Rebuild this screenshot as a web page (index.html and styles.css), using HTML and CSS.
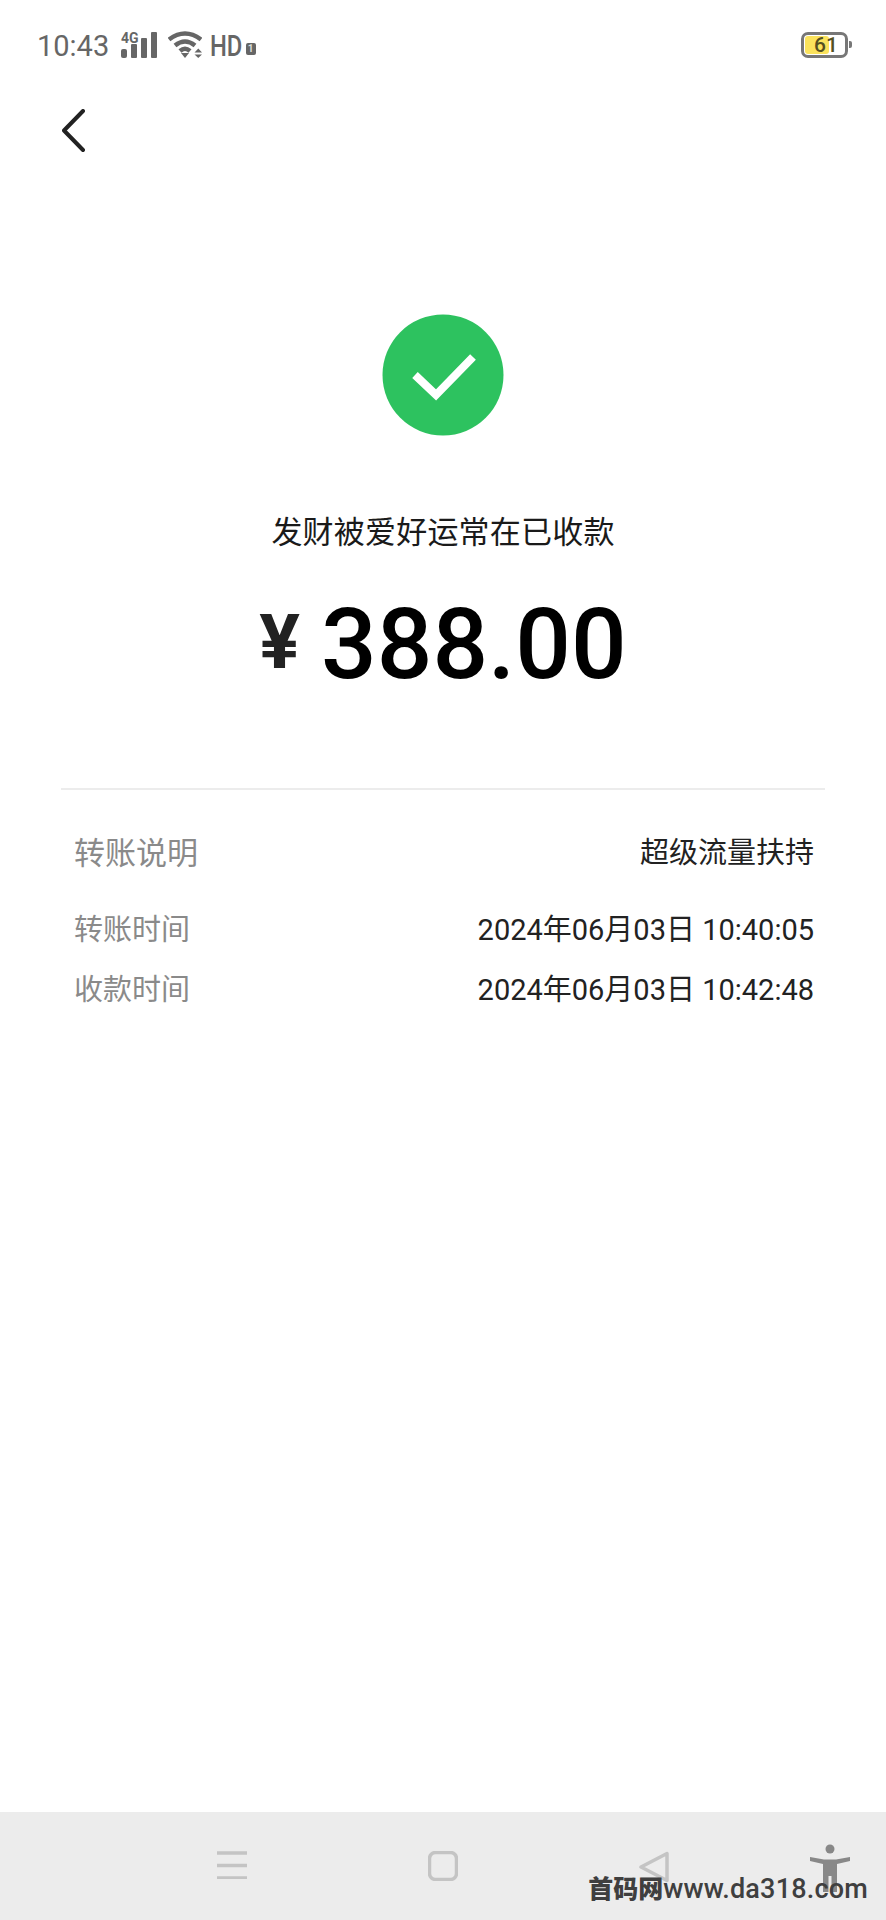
FILE: index.html
```html
<!DOCTYPE html>
<html lang="zh-CN">
<head>
    <meta charset="UTF-8">
    <meta name="viewport" content="width=device-width, initial-scale=1.0">
    <title>转账详情</title>
    <link rel="stylesheet" href="styles.css">
</head>
<body>
    <div class="page">
        <div class="status-bar">
            <span class="clock">10:43</span>
            <svg class="signal" width="36" height="26" viewBox="0 0 36 26">
                <text x="0" y="10.500" class="signal-text">4G</text>
                <rect x="0" y="17" width="6" height="9" rx="2"/>
                <rect x="10" y="12" width="6" height="14" rx="1"/>
                <rect x="20" y="6" width="6" height="20" rx="1"/>
                <rect x="30" y="0" width="6" height="26" rx="1"/>
            </svg>
            <svg class="wifi" width="34" height="27" viewBox="0 0 34 27">
                <path d="M1 8.500Q17 -3.500 33 8.500"/>
                <path d="M7 14.500Q17 6.500 27 14.500"/>
                <path d="M12 20Q17 15.500 22 20"/>
                <polygon class="solid" points="13,22 21,22 17,27"/>
                <polygon class="solid" points="26.500,21.500 34,21.500 30.250,17.500"/>
                <polygon class="solid" points="26.500,23.500 34,23.500 30.250,27"/>
            </svg>
            <span class="hd">HD</span>
            <span class="sim">1</span>
            <div class="battery">
                <div class="battery-fill"></div>
                <span class="battery-num">61</span>
            </div>
        </div>

        <div class="top-nav">
            <svg width="24" height="44" viewBox="0 0 24 44">
                <path d="M21 2L2 21.500L21 41"/>
            </svg>
        </div>

        <div class="result">
            <svg class="ok-icon" width="122" height="122" viewBox="0 0 122 122">
                <circle cx="61" cy="61" r="60.500"/>
                <path d="M33 61L54 81L91 43"/>
            </svg>
            <div class="payee">发财被爱好运常在已收款</div>
            <div class="amount"><span class="yen">¥</span><span class="num">388.00</span></div>
        </div>

        <div class="details">
            <div class="row row-first">
                <span class="label label-big">转账说明</span>
                <span class="value">超级流量扶持</span>
            </div>
            <div class="row">
                <span class="label">转账时间</span>
                <span class="value">2024年06月03日 10:40:05</span>
            </div>
            <div class="row">
                <span class="label">收款时间</span>
                <span class="value">2024年06月03日 10:42:48</span>
            </div>
        </div>

        <div class="nav-bar">
            <div class="nav-keys">
                <svg class="nav-icon" width="30" height="28" viewBox="0 0 30 28">
                    <path d="M0 2H30M0 14.500H30M0 27H30"/>
                </svg>
                <svg class="nav-icon" width="30" height="30" viewBox="0 0 30 30">
                    <rect x="1.500" y="1.500" width="27" height="27" rx="6"/>
                </svg>
                <svg class="nav-icon" width="30" height="32" viewBox="0 0 30 32">
                    <path d="M28 2.500V29.500L2 16Z" stroke-linejoin="round"/>
                </svg>
            </div>
            <svg class="person" width="40" height="48" viewBox="0 0 40 48">
                <circle cx="20" cy="5" r="4.500"/>
                <path d="M0 13L14 15.500H26L40 13V17L27 20V48H21.500V32H18.500V48H13V20L0 17Z"/>
            </svg>
            <span class="watermark"><span class="mark-cn">首码网</span>www.da318.com</span>
        </div>
    </div>
</body>
</html>
```

FILE: styles.css
```css
* {
    margin: 0;
    padding: 0;
    box-sizing: border-box;
}

body {
    background: #fff;
    font-family: Roboto, "Noto Sans CJK SC", sans-serif;
}

.page {
    width: 886px;
    height: 1920px;
    display: flex;
    flex-direction: column;
    overflow: hidden;
}

/* Status bar */
.status-bar {
    height: 90px;
    padding: 30px 38px 0 37px;
    display: flex;
    align-items: flex-start;
    color: #666;
}

.clock {
    font-size: 29px;
    line-height: 30px;
    margin-top: 1px;
}

.signal {
    margin: 2px 0 0 12px;
    fill: #666;
    overflow: visible;
}

.signal-text {
    font-family: Roboto, sans-serif;
    font-size: 14px;
    font-weight: 700;
}

.wifi {
    margin: 1px 0 0 11px;
    fill: none;
    stroke: #666;
    stroke-width: 4.500;
}

.wifi .solid {
    fill: #666;
    stroke: none;
}

.hd {
    font-size: 29px;
    font-weight: 500;
    line-height: 30px;
    margin: 1px -7px 0 8px;
    transform: scaleX(0.82);
    transform-origin: left;
}

.sim {
    width: 10px;
    height: 12px;
    margin: 13px 0 0 3px;
    background: #666;
    color: #ddd;
    border-radius: 2px;
    font-size: 10px;
    line-height: 12px;
    font-weight: 700;
    text-align: center;
}

.battery {
    width: 47px;
    height: 26px;
    margin: 2px 0 0 auto;
    border: 3px solid #777;
    border-radius: 7px;
    padding: 1px;
    position: relative;
    color: #555020;
}

.battery::after {
    content: "";
    position: absolute;
    right: -7px;
    top: 6px;
    width: 3px;
    height: 7px;
    background: #777;
    border-radius: 0 2px 2px 0;
}

.battery-fill {
    width: 24px;
    height: 18px;
    background: #fbe35c;
    border-radius: 3px;
}

.battery-num {
    position: absolute;
    left: 10px;
    top: -1px;
    font-size: 21px;
    line-height: 22px;
    font-weight: 500;
}

/* Back arrow */
.top-nav {
    height: 224px;
    padding: 19px 0 0 62px;
}

.top-nav svg {
    display: block;
    fill: none;
    stroke: #222;
    stroke-width: 4;
    stroke-linecap: round;
    stroke-linejoin: round;
}

/* Amount */
.result {
    height: 476px;
    display: flex;
    flex-direction: column;
    align-items: center;
    border-bottom: 2px solid #ececec;
    margin: 0 61px;
}

.ok-icon {
    display: block;
    flex-shrink: 0;
}

.ok-icon circle {
    fill: #2dc25f;
}

.ok-icon path {
    fill: none;
    stroke: #fff;
    stroke-width: 8;
}

.payee {
    margin-top: 74px;
    font-size: 31px;
    letter-spacing: 0.2px;
    line-height: 46px;
    color: #1a1a1a;
}

.amount {
    margin-top: 34px;
    display: flex;
    align-items: center;
    color: #000;
}

.yen {
    font-size: 76px;
    font-weight: 700;
    line-height: 76px;
    color: #222;
    margin-right: 21px;
    margin-bottom: 6px;
}

.num {
    font-size: 98px;
    font-weight: 500;
    line-height: 110px;
}

/* Detail rows */
.details {
    padding: 36px 72px 0 74px;
}

.row {
    display: flex;
    justify-content: space-between;
    align-items: center;
    height: 60px;
    font-size: 29px;
}

.row-first {
    height: 48px;
    margin-bottom: 23px;
}

.label {
    color: #8a8a8a;
}

.label-big {
    font-size: 31px;
}

.value {
    color: #222;
}

/* System nav */
.nav-bar {
    margin-top: auto;
    height: 108px;
    background: #ececec;
    position: relative;
    display: flex;
    align-items: flex-start;
    justify-content: space-between;
    padding: 32px 36px 0 217px;
}

.nav-keys {
    display: flex;
    align-items: flex-start;
    gap: 181px;
}

.nav-icon {
    fill: none;
    stroke: #c4c4c4;
    stroke-width: 3.500;
    display: block;
    margin-top: 7px;
}

.person {
    fill: #888;
    display: block;
}

.watermark {
    position: absolute;
    right: 18px;
    bottom: 18px;
    font-family: Roboto, "Noto Sans CJK SC", sans-serif;
    font-size: 27px;
    letter-spacing: 0.200px;
    line-height: 24px;
    font-weight: 500;
    color: #3f3f3f;
}

.mark-cn {
    font-size: 25px;
    font-weight: 900;
    letter-spacing: 0;
}
```
